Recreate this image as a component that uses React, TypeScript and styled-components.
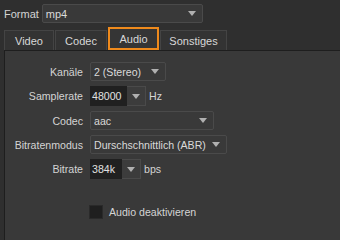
import styled, { createGlobalStyle } from 'styled-components';

const GlobalStyle = createGlobalStyle`
  html, body {
    margin: 0;
    padding: 0;
    background: #2f2f2f;
  }
`;

const Window = styled.div`
  width: 340px;
  height: 240px;
  box-sizing: border-box;
  background: #2f2f2f;
  color: #d4d4d4;
  font-family: 'Liberation Sans', Arial, sans-serif;
  font-size: 10.6px;
  white-space: nowrap;
  overflow: hidden;
  display: flex;
  flex-direction: column;
  padding-top: 4px;
`;

const FormatRow = styled.div`
  display: flex;
  align-items: center;
  gap: 3px;
  padding-left: 4px;
  height: 19px;
  font-size: 11px;
`;

const Combo = styled.div<{ $w: number }>`
  width: ${(p) => p.$w}px;
  height: 19px;
  box-sizing: border-box;
  border: 1px solid #4a4a4a;
  border-radius: 2px;
  background: #393939;
  display: flex;
  align-items: center;
  justify-content: space-between;
  padding: 0 6px 0 3px;
  color: #dadada;
`;

const Arrow = () => (
  <svg width="8" height="5" viewBox="0 0 8 5">
    <path d="M0 0 H8 L4 5 Z" fill="#b0b0b0" />
  </svg>
);

const TabBar = styled.div`
  display: flex;
  padding-left: 4px;
  margin-top: 4px;
  height: 23px;
  align-items: flex-end;
`;

const Tab = styled.div<{ $w: number; $active?: boolean }>`
  width: ${(p) => p.$w}px;
  height: ${(p) => (p.$active ? 23 : 20)}px;
  box-sizing: border-box;
  display: flex;
  align-items: center;
  justify-content: center;
  background: ${(p) => (p.$active ? '#353535' : '#333333')};
  border: ${(p) => (p.$active ? '2px solid #ef8a1c' : '1px solid #444')};
  border-bottom: ${(p) => (p.$active ? '2px solid #ef8a1c' : 'none')};
  color: #d8d8d8;
  margin-right: 1px;
  padding-top: ${(p) => (p.$active ? 0 : 1)}px;
  font-size: 11px;
`;

const Panel = styled.div`
  flex: 1;
  margin-left: 4px;
  border-top: 1px solid #1e1e1e;
  border-left: 1px solid #1e1e1e;
  background: #393939;
  padding-top: 11px;
`;

const Form = styled.div`
  display: grid;
  grid-template-columns: 80px auto;
  column-gap: 5px;
  row-gap: 5px;
  align-items: center;
`;

const Label = styled.div`
  text-align: right;
  padding-right: 2px;
  color: #d4d4d4;
`;

const Field = styled.div`
  display: flex;
  align-items: center;
  gap: 3px;
`;

const Spin = styled.div<{ $w: number }>`
  width: ${(p) => p.$w}px;
  height: 20px;
  display: flex;
  box-sizing: border-box;
`;

const SpinText = styled.div`
  flex: 1;
  background: #202020;
  display: flex;
  align-items: center;
  padding-left: 2px;
  color: #e0e0e0;
`;

const SpinButton = styled.div`
  width: 18px;
  background: #3c3c3c;
  border: 1px solid #4a4a4a;
  border-left: none;
  display: flex;
  align-items: center;
  justify-content: center;
`;

const CheckRow = styled.div`
  display: flex;
  align-items: center;
  gap: 6px;
  margin-left: 84px;
  margin-top: 26px;
`;

const Box = styled.div`
  width: 14px;
  height: 14px;
  background: #1f1f1f;
  border: 1px solid #2a2a2a;
  box-sizing: border-box;
`;

export default function App() {
  return (
    <>
      <GlobalStyle />
      <Window>
        <FormatRow>
          <span>Format</span>
          <Combo $w={161}>
            <span>mp4</span>
            <Arrow />
          </Combo>
        </FormatRow>
        <TabBar>
          <Tab $w={50}>Video</Tab>
          <Tab $w={52}>Codec</Tab>
          <Tab $w={51} $active>Audio</Tab>
          <Tab $w={67}>Sonstiges</Tab>
        </TabBar>
        <Panel>
          <Form>
            <Label>Kanäle</Label>
            <Field>
              <Combo $w={76}>
                <span>2 (Stereo)</span>
                <Arrow />
              </Combo>
            </Field>
            <Label>Samplerate</Label>
            <Field>
              <Spin $w={56}>
                <SpinText>48000</SpinText>
                <SpinButton>
                  <Arrow />
                </SpinButton>
              </Spin>
              <span>Hz</span>
            </Field>
            <Label>Codec</Label>
            <Field>
              <Combo $w={124}>
                <span>aac</span>
                <Arrow />
              </Combo>
            </Field>
            <Label>Bitratenmodus</Label>
            <Field>
              <Combo $w={137}>
                <span>Durschschnittlich (ABR)</span>
                <Arrow />
              </Combo>
            </Field>
            <Label>Bitrate</Label>
            <Field>
              <Spin $w={51}>
                <SpinText>384k</SpinText>
                <SpinButton>
                  <Arrow />
                </SpinButton>
              </Spin>
              <span>bps</span>
            </Field>
          </Form>
          <CheckRow>
            <Box />
            <span>Audio deaktivieren</span>
          </CheckRow>
        </Panel>
      </Window>
    </>
  );
}
